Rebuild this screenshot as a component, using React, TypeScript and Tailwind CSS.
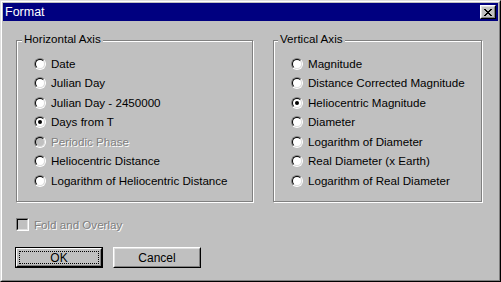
import React from "react";

const font = { fontFamily: '"Liberation Sans", Arial, sans-serif' };

function Radio({ label, checked = false, disabled = false }: { label: string; checked?: boolean; disabled?: boolean }) {
  return (
    <div className="flex h-[19.5px] items-center">
      <span className="flex h-[12px] w-[12px] shrink-0 rounded-full border border-t-[#808080] border-l-[#808080] border-r-white border-b-white">
        <span
          className={`flex flex-1 items-center justify-center rounded-full border border-t-black border-l-black border-r-[#dfdfdf] border-b-[#dfdfdf] ${disabled ? "bg-[#c0c0c0]" : "bg-white"}`}
        >
          {checked && <span className="h-[4px] w-[4px] rounded-full bg-black" />}
        </span>
      </span>
      <span
        className={`ml-[5px] whitespace-nowrap text-[11.6px] leading-none ${disabled ? "text-[#808080] [text-shadow:1px_1px_0_#fff]" : "text-black"}`}
      >
        {label}
      </span>
    </div>
  );
}

function Group({ title, width, labelLeft, items }: { title: string; width: string; labelLeft: string; items: { label: string; checked?: boolean; disabled?: boolean }[] }) {
  return (
    <div
      className={`relative h-[162px] ${width} border border-[#808080] shadow-[inset_1px_1px_0_#fff,1px_1px_0_#fff]`}
    >
      <span className={`absolute top-[-9px] ${labelLeft} bg-[#c0c0c0] px-[2px] text-[11.6px] leading-[14px] text-black whitespace-nowrap`}>
        {title}
      </span>
      <div className="flex flex-col pl-[17px] pt-[13px]">
        {items.map((it) => (
          <Radio key={it.label} {...it} />
        ))}
      </div>
    </div>
  );
}

function Button({ label, isDefault = false }: { label: string; isDefault?: boolean }) {
  if (isDefault) {
    return (
      <div className="flex h-[21px] w-[88px] border border-black">
        <div className="flex flex-1 border border-t-white border-l-white border-r-black border-b-black">
          <div className="flex flex-1 border border-t-[#c0c0c0] border-l-[#c0c0c0] border-r-[#808080] border-b-[#808080] p-[1px]">
            <div className="flex flex-1 items-center justify-center border border-dotted border-black text-[12px] leading-none text-black">
              {label}
            </div>
          </div>
        </div>
      </div>
    );
  }
  return (
    <div className="flex h-[21px] w-[88px] border border-t-white border-l-white border-r-black border-b-black">
      <div className="flex flex-1 items-center justify-center border border-t-[#dfdfdf] border-l-[#dfdfdf] border-r-[#808080] border-b-[#808080] text-[12px] leading-none text-black">
        {label}
      </div>
    </div>
  );
}

export default function App() {
  return (
    <div style={font} className="h-[282px] w-[501px] overflow-hidden bg-[#c0c0c0]">
      <div className="flex h-full w-full flex-col border border-t-[#dfdfdf] border-l-[#dfdfdf] border-r-black border-b-black">
        <div className="flex flex-1 flex-col border border-t-white border-l-white border-r-[#808080] border-b-[#808080] p-[1px]">
          {/* Title bar */}
          <div className="flex h-[18px] items-center justify-between bg-[#000080] pl-[2px] pr-[2px]">
            <span className="text-[12.5px] leading-none text-white">Format</span>
            <div className="flex h-[14px] w-[16px] border border-t-white border-l-white border-r-black border-b-black">
              <div className="flex flex-1 items-center justify-center border border-t-[#dfdfdf] border-l-[#dfdfdf] border-r-[#808080] border-b-[#808080] bg-[#c0c0c0]">
                <svg width="8" height="7" viewBox="0 0 8 7" shapeRendering="crispEdges">
                  <path d="M0 0h2v1h-2zM6 0h2v1h-2zM1 1h2v1h-2zM5 1h2v1h-2zM2 2h4v1h-4zM3 3h2v1h-2zM2 4h4v1h-4zM1 5h2v1h-2zM5 5h2v1h-2zM0 6h2v1h-2zM6 6h2v1h-2z" fill="#000" />
                </svg>
              </div>
            </div>
          </div>
          {/* Body */}
          <div className="flex flex-col pl-[13px] pt-[19px]">
            <div className="flex gap-[20px]">
              <Group
                title="Horizontal Axis"
                width="w-[237px]"
                labelLeft="left-[5px]"
                items={[
                  { label: "Date" },
                  { label: "Julian Day" },
                  { label: "Julian Day - 2450000" },
                  { label: "Days from T", checked: true },
                  { label: "Periodic Phase", disabled: true },
                  { label: "Heliocentric Distance" },
                  { label: "Logarithm of Heliocentric Distance" },
                ]}
              />
              <Group
                title="Vertical Axis"
                width="w-[209px]"
                labelLeft="left-[4px]"
                items={[
                  { label: "Magnitude" },
                  { label: "Distance Corrected Magnitude" },
                  { label: "Heliocentric Magnitude", checked: true },
                  { label: "Diameter" },
                  { label: "Logarithm of Diameter" },
                  { label: "Real Diameter (x Earth)" },
                  { label: "Logarithm of Real Diameter" },
                ]}
              />
            </div>
            <div className="mt-[16px] flex h-[13px] items-center">
              <span className="flex h-[13px] w-[13px] border border-t-[#808080] border-l-[#808080] border-r-white border-b-white">
                <span className="flex-1 border border-t-black border-l-black border-r-[#dfdfdf] border-b-[#dfdfdf] bg-[#c0c0c0]" />
              </span>
              <span className="ml-[5px] text-[11.6px] leading-none text-[#808080] [text-shadow:1px_1px_0_#fff]">
                Fold and Overlay
              </span>
            </div>
            <div className="ml-[-1px] mt-[16px] flex gap-[10px]">
              <Button label="OK" isDefault />
              <Button label="Cancel" />
            </div>
          </div>
        </div>
      </div>
    </div>
  );
}
